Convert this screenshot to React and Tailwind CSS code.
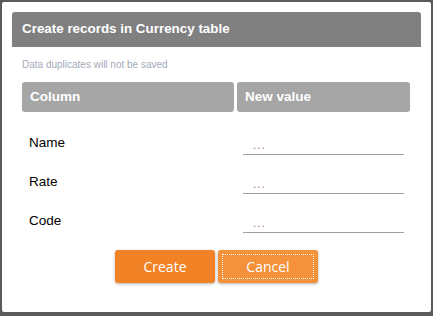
import React from 'react'

const rows = ['Name', 'Rate', 'Code']

const App = () => {
  return (
    <div className="w-[433px] h-[316px] bg-[#5a5a5a] pt-[2px] pl-[2px]" style={{ fontFamily: '"Liberation Sans", Arial, sans-serif' }}>
      <div className="w-[429px] h-[310px] bg-white rounded-[2px] p-[10px]">
        {/* Header */}
        <div className="h-[35px] bg-[#808080] rounded-t-[3px] flex items-center pl-[10px]">
          <span className="text-white font-bold text-[13.4px]">Create records in Currency table</span>
        </div>

        <p className="text-[10px] text-[#a3aab8] mt-[12px] ml-[10px] leading-[12px]">Data duplicates will not be saved</p>

        {/* Table head */}
        <div className="flex gap-[3px] mt-[11px] ml-[10px]">
          <div className="w-[212px] h-[30px] bg-[#a6a6a6] rounded-[3px] flex items-center pl-[8px]">
            <span className="text-white font-bold text-[13.5px]">Column</span>
          </div>
          <div className="w-[173px] h-[30px] bg-[#a6a6a6] rounded-[3px] flex items-center pl-[8px]">
            <span className="text-white font-bold text-[13.5px]">New value</span>
          </div>
        </div>

        {/* Rows */}
        <div className="flex flex-col mt-[12px]">
          {rows.map((r) => (
            <div key={r} className="h-[39px] flex items-start">
              <span className="w-[231px] pl-[17px] pt-[11px] text-[13.5px] text-black leading-[15px]">{r}</span>
              <div className="w-[161px] h-[31px] border-b border-[#a0a0a0] flex items-end pl-[10px] pb-[3px]">
                <span className="text-[12px] text-[#9c8270] leading-[12px] tracking-[1px]">...</span>
              </div>
            </div>
          ))}
        </div>

        {/* Buttons */}
        <div className="flex justify-center gap-[3px] mt-[9px]">
          <button
            className="w-[100px] h-[33px] bg-[#f28226] rounded-[3px] text-white text-[14px] shadow-[0_1px_3px_rgba(0,0,0,0.3)]"
            style={{ fontFamily: '"Open Sans", "Noto Sans", sans-serif' }}
          >
            Create
          </button>
          <button
            className="w-[100px] h-[33px] bg-[#f4913b] rounded-[3px] text-white text-[14px] shadow-[0_1px_3px_rgba(0,0,0,0.3)] p-[4px]"
            style={{ fontFamily: '"Open Sans", "Noto Sans", sans-serif' }}
          >
            <span className="w-full h-full flex items-center justify-center border border-dotted border-white">Cancel</span>
          </button>
        </div>
      </div>
    </div>
  )
}

export default App
